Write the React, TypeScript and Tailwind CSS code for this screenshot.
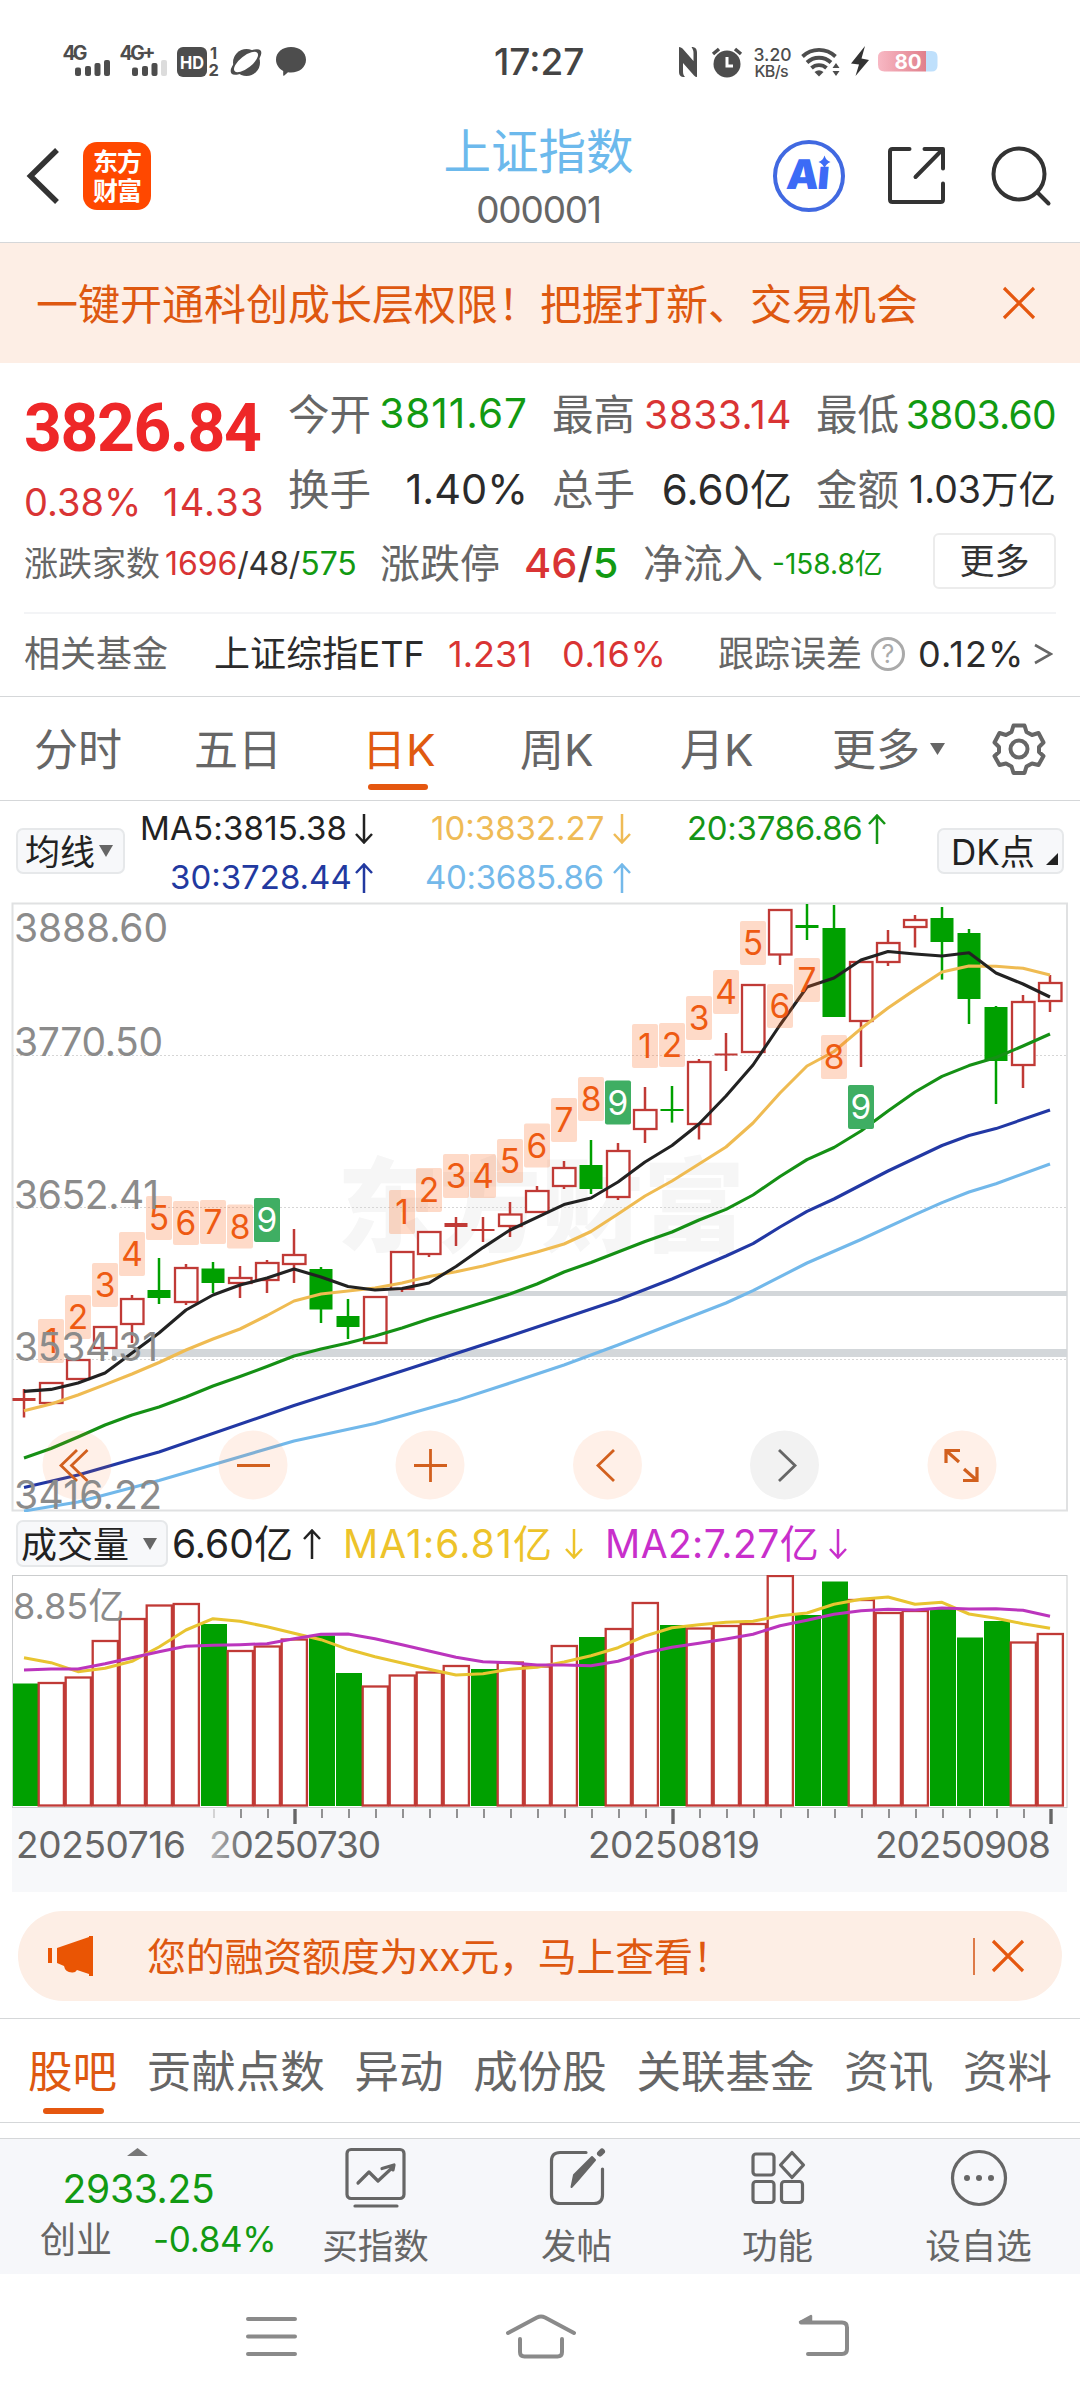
import React from 'react'

type Candle = {
  up: boolean
  top: number
  bottom: number
  high: number
  low: number
}

const STEP = 27
const FIRST_X = 24
const RED = '#c03a36'
const GREEN = '#00a000'

const cx = (i: number) => FIRST_X + i * STEP

const c = (up: boolean, top: number, bottom: number, high = top, low = bottom): Candle => ({
  up,
  top,
  bottom,
  high,
  low,
})

const candles: Candle[] = [
  c(true, 1398, 1401, 1389, 1417.5),
  c(true, 1382, 1404),
  c(true, 1359, 1380),
  c(true, 1326, 1349),
  c(true, 1298, 1325, 1295, 1343),
  c(false, 1290, 1298, 1258, 1304),
  c(true, 1267, 1303, 1264, 1305),
  c(false, 1268.5, 1283, 1262, 1293),
  c(true, 1277, 1284, 1266, 1298),
  c(true, 1262, 1281, 1260, 1293),
  c(true, 1254, 1265, 1229, 1283),
  c(false, 1269, 1309.5, 1267, 1323),
  c(false, 1316, 1327, 1299, 1339),
  c(true, 1296, 1344),
  c(true, 1251, 1290, 1251, 1292),
  c(true, 1231, 1255, 1231, 1257),
  c(true, 1223, 1227, 1217, 1246),
  c(true, 1229, 1231, 1217, 1242),
  c(true, 1213.5, 1227, 1202, 1237),
  c(true, 1190, 1213, 1186, 1213),
  c(true, 1167, 1187, 1161, 1189),
  c(false, 1165, 1189, 1140, 1194),
  c(true, 1150, 1198, 1143, 1200),
  c(true, 1109, 1130, 1087, 1143),
  c(false, 1109, 1111, 1086, 1122.6),
  c(true, 1061, 1125, 1059, 1139.5),
  c(true, 1053.5, 1055.5, 1033, 1071),
  c(true, 984, 1053),
  c(true, 909, 955.5, 909, 965),
  c(false, 925, 928, 904, 940),
  c(false, 928, 1017, 905, 1017),
  c(true, 961, 1022, 961, 1067),
  c(true, 942, 963, 930, 966),
  c(true, 919, 928, 915, 947.5),
  c(false, 918, 942, 907, 979.6),
  c(false, 933, 999, 929, 1024),
  c(false, 1007, 1061, 1006, 1104),
  c(true, 1001, 1066, 995, 1088),
  c(true, 982, 1002, 975, 1012),
]

const ma5 = [
  1391.4, 1389.4, 1383, 1373, 1353, 1333, 1310, 1295, 1285, 1278, 1269, 1277, 1286.5, 1290, 1288.5, 1283, 1266.5,
  1247.6, 1230, 1217.4, 1204.6, 1198, 1182, 1162, 1145.5, 1124, 1096, 1065, 1025, 987, 978, 960, 951.5, 954, 956,
  952.7, 973, 984, 997,
]
const ma10 = [
  1410.7, 1404, 1395, 1384.6, 1374, 1362.5, 1350, 1339, 1329, 1315.5, 1301, 1294, 1291, 1288, 1283, 1276.5, 1271.7,
  1266, 1259, 1252, 1244, 1231.5, 1214, 1196, 1181, 1164, 1147, 1123, 1093, 1066, 1051.5, 1028.6, 1008, 989.6, 972,
  966, 966.3, 968.3, 975,
]
const ma20 = [
  1458, 1448.5, 1437, 1425, 1415, 1407, 1397, 1386, 1376.5, 1366.5, 1356, 1349, 1343, 1336, 1328, 1319, 1310.7, 1302.6,
  1294, 1284, 1272, 1262.5, 1252, 1241.5, 1232, 1220, 1209.4, 1195, 1176.5, 1159.6, 1147.5, 1131, 1111, 1092, 1076.4,
  1065.6, 1057.5, 1046, 1034,
]
// index -> y pairs, the long averages are close to straight between them
const ma30: [number, number][] = [
  [0, 1487.5], [2, 1475], [4, 1459.5], [5, 1452], [10, 1405.5], [14, 1371], [18, 1336], [20, 1318], [22, 1300],
  [24, 1279], [26, 1256], [27, 1243.6], [28, 1227], [29, 1211.4], [30, 1199], [32, 1171], [34, 1145.5],
  [35, 1135.5], [36, 1128.6], [38, 1110],
]
const ma40: [number, number][] = [
  [0, 1511], [2, 1502], [5, 1480.6], [10, 1441], [13, 1423.5], [16, 1400.6], [18, 1383], [20, 1365], [22, 1345],
  [24, 1324], [26, 1303], [27, 1290.6], [29, 1263], [31, 1239.5], [33, 1214.6], [34, 1202.6], [35, 1192],
  [36, 1183.7], [38, 1164],
]

const marks: [number, number, number][] = [
  [1, 1, 1319], [2, 2, 1295], [3, 3, 1263], [4, 4, 1232], [5, 5, 1196], [6, 6, 1201], [7, 7, 1200], [8, 8, 1204.5],
  [9, 9, 1198], [14, 1, 1190], [15, 2, 1168], [16, 3, 1154], [17, 4, 1154], [18, 5, 1139], [19, 6, 1123.5],
  [20, 7, 1098], [21, 8, 1077], [22, 9, 1080.5], [23, 1, 1024], [24, 2, 1023], [25, 3, 996], [26, 4, 970],
  [27, 5, 921], [28, 6, 984], [29, 7, 958], [30, 8, 1035], [31, 9, 1085],
]

const volumes: [boolean, number][] = [
  [false, 1683.5], [true, 1682], [true, 1676.5], [true, 1640], [true, 1618], [true, 1604.5], [true, 1603],
  [false, 1624], [true, 1650], [true, 1645.5], [true, 1638.5], [false, 1635.5], [false, 1673], [true, 1685.5],
  [true, 1674.5], [true, 1671.5], [true, 1665], [false, 1669], [true, 1661.5], [true, 1665.5], [true, 1645],
  [false, 1637], [true, 1628], [true, 1602], [false, 1625], [true, 1627.5], [true, 1625], [true, 1623],
  [true, 1575], [false, 1615], [false, 1581.5], [true, 1599], [true, 1612], [true, 1610], [false, 1608],
  [false, 1637.5], [false, 1621], [true, 1641.5], [true, 1633],
]
const volMa1 = [
  1657.7, 1662.7, 1671.7, 1668.3, 1661.3, 1647, 1630, 1618.7, 1621.3, 1626.7, 1633.3, 1639.7, 1649.3, 1656.7, 1663,
  1669.3, 1675, 1673.7, 1669.3, 1667.3, 1662, 1655.7, 1647.7, 1636, 1627.7, 1624.7, 1622.3, 1621.3, 1615.7, 1613,
  1604.3, 1599.3, 1597, 1604.3, 1602.3, 1614, 1618.3, 1623.7, 1628.3,
]
const volMa2 = [
  1670, 1669, 1669, 1663.7, 1657.7, 1651.7, 1646.3, 1645.3, 1644.7, 1643.7, 1638.7, 1634.3, 1634, 1638.7, 1644.7,
  1651, 1657.3, 1661.7, 1662.7, 1665, 1665, 1665.7, 1661.3, 1653, 1647.3, 1643.3, 1639, 1634.3, 1625.7, 1620.3,
  1614.3, 1610.7, 1609.3, 1610, 1608, 1609, 1608.7, 1610.3, 1616.3,
]

const line = (ys: number[]) => ys.map((y, i) => `${cx(i)},${y}`).join(' ')
const sparse = (pts: [number, number][]) => pts.map(([i, y]) => `${cx(i)},${y}`).join(' ')

const StatusBar = () => (
  <div className="flex h-[110px] items-start pt-[35px] text-[#4d4d4d]">
    <svg className="ml-[60px]" width="250" height="50" viewBox="60 35 250 50" fill="currentColor">
      <g fontFamily="Inter" fontWeight="700" fontSize="19.5">
        <text x="62.5" y="59.5" textLength="25">4G</text>
        <text x="119.5" y="59.5" textLength="36">4G+</text>
        <text x="210" y="59" fontSize="16.5">1</text>
        <text x="208.500" y="76" fontSize="16.5">2</text>
      </g>
      <rect x="75" y="67.5" width="6" height="8.5" rx="2" />
      <rect x="85" y="66" width="6" height="10" rx="2" />
      <rect x="94.5" y="63" width="6" height="13" rx="2" />
      <rect x="104" y="60" width="6" height="16" rx="2" />
      <rect x="132" y="67.5" width="6" height="8.5" rx="2" />
      <rect x="142" y="66" width="6" height="10" rx="2" />
      <rect x="151.5" y="63" width="6" height="13" rx="2" />
      <rect x="161" y="60" width="6" height="16" rx="2" fill="#dcdcdc" />
      <rect x="177" y="47" width="30" height="30" rx="6" />
      <text x="180" y="68.5" fill="#fff" fontFamily="Inter" fontWeight="700" fontSize="18" textLength="24" lengthAdjust="spacingAndGlyphs">HD</text>
      <circle cx="246.500" cy="62.500" r="13.500" />
      <ellipse cx="246" cy="62" rx="18.500" ry="7.500" transform="rotate(-38 246 62)" />
      <ellipse cx="246" cy="62" rx="14.500" ry="6" transform="rotate(-38 246 62)" fill="#fff" />
      <path d="M291 47c8.600 0 15 5.300 15 12.700S299.500 72.500 291 72.500c-1 0-2 0-3-.3l-4 3.500q-1 .5-.8-1V71C279 68.500 276 64.500 276 59.700 276 52.300 282.500 47 291 47z" />
    </svg>
    <div className="ml-[184px] mt-[8px] w-[96px] text-[37px] leading-[38px] font-medium text-[#444]">
      17:27
    </div>
    <svg className="ml-[88px]" width="262" height="50" viewBox="678 35 262 50" fill="currentColor">
      <path d="M679 47q2 0 3.500 1.500L693.500 61V53c0-3-1-4-2-6 4 0 5.500 2 5.500 6v24q-1.500 0-3-1.500L683 63v8c0 3 .5 4 2 6-5 0-6-2-6-6z" />
      <circle cx="727" cy="64" r="13.500" />
      <path d="M713 54l6-5M741 54l-6-5" stroke="currentColor" strokeWidth="3.500" />
      <path d="M727 57v9h6" stroke="#fff" strokeWidth="3" fill="none" />
      <g fontFamily="Inter" fontSize="17.500" fontWeight="500">
        <text x="753.5" y="61" textLength="38">3.20</text>
        <text x="754.5" y="76.500" fontSize="16" textLength="34">KB/s</text>
      </g>
      <g fill="none" stroke="currentColor" strokeWidth="3.800">
        <path d="M802.500 56.500a24 24 0 0 1 33 0" />
        <path d="M807 62.500a17.500 17.500 0 0 1 24 0" />
        <path d="M811.500 68a11 11 0 0 1 15 0" />
      </g>
      <path d="M814.500 72q4.500-3.500 9 0l-4.500 4.500z" />
      <path d="M832.500 68l3.500-5 3.500 5zM832.500 71h7l-3.500 5z" />
      <path d="M865 46l-14 17.500 8 1L855.500 76 869 60l-7.500-1.500z" fill="#333" />
      <defs>
        <linearGradient id="battery" x1="0" x2="1">
          <stop offset="0" stopColor="#f8b8c4" />
          <stop offset="1" stopColor="#e0808c" />
        </linearGradient>
      </defs>
      <path d="M926 51h5.500q6 0 6 6v8.500q0 6-6 6H926z" fill="#bfe0fc" />
      <path d="M926 51H884.500q-6.500 0-6.500 6.500v7q0 7 6.500 7H926z" fill="url(#battery)" />
      <text x="894.500" y="68.500" fontFamily="Inter" fontWeight="700" fontSize="20.500" fill="#fff">80</text>
    </svg>
  </div>
)

const Header = () => (
  <div className="flex h-[133px] items-center border-b border-[#d5d7d9]">
    <div className="flex w-[415px] items-center pl-[26px]">
      <svg width="34" height="56" viewBox="0 0 34 56" fill="none" stroke="#333" strokeWidth="5.500">
        <path d="M31 2L4.500 28 31 54" />
      </svg>
      <div className="ml-[23px] flex size-[68px] flex-col items-center justify-center rounded-[14px] bg-[#ff4800] pt-[2px] text-[25px] leading-[29px] font-bold tracking-[-1px] text-white">
        <span>东方</span>
        <span>财富</span>
      </div>
    </div>
    <div className="flex w-[247px] flex-col items-center pt-[8px]">
      <span className="text-[47.5px] leading-[60px] text-[#6cb9ec]">上证指数</span>
      <span className="text-[37px] leading-[56px] tracking-[-1.2px] text-[#666]">000001</span>
    </div>
    <div className="flex flex-1 items-center justify-end pr-[28px]">
      <svg width="74" height="74" viewBox="0 0 74 74" fill="#3c6bf6">
        <circle cx="37" cy="37" r="34" fill="none" stroke="#4169e1" strokeWidth="4" />
        <text x="14" y="50" fontFamily="Inter" fontWeight="900" fontSize="41" textLength="43" transform="skewX(-5) translate(4 0)">Aı</text>
        <path d="M52.500 16.500q1.500 5 6 6.500-4.500 1.500-6 6.500-1.500-5-6-6.500 4.500-1.500 6-6.500z" />
      </svg>
      <svg className="ml-[41px]" width="60" height="60" viewBox="0 0 60 60" fill="none" stroke="#333" strokeWidth="4" strokeLinecap="round" strokeLinejoin="round">
        <path d="M22.500 3H5.500Q3 3 3 5.500V53.500Q3 56 5.500 56H53.500Q56 56 56 53.500V37.500" />
        <path d="M37.500 3H56V22.500M55 4L28.500 31" />
      </svg>
      <svg className="ml-[43px]" width="62" height="62" viewBox="0 0 62 62" fill="none" stroke="#333" strokeWidth="4" strokeLinecap="round">
        <circle cx="29" cy="29" r="25.500" />
        <path d="M47.500 47.500L58.500 58.500" />
      </svg>
    </div>
  </div>
)

const Close = () => (
  <svg width="34" height="34" viewBox="0 0 34 34" stroke="#e5570f" strokeWidth="3.200">
    <path d="M2 2L32 32M32 2L2 32" />
  </svg>
)

const Banner = () => (
  <div className="flex h-[120px] items-center justify-between bg-[#fdeee5] pr-[44px] pl-[36px]">
    <span className="pt-[3px] text-[42px] leading-none whitespace-nowrap text-[#de5810]">
      一键开通科创成长层权限！把握打新、交易机会
    </span>
    <Close />
  </div>
)

interface StatProps {
  label: string
  children: React.ReactNode
}

const Stat = ({ label, children }: StatProps) => (
  <div className="flex h-[75px] items-center justify-between whitespace-nowrap">
    <span className="pt-[2px] text-[41.5px] leading-none text-[#666]">{label}</span>
    {children}
  </div>
)

const Quote = () => (
  <div className="h-[334px] border-b border-[#d5d7d9]">
    <div className="flex h-[165px] pr-[24px] pl-[24px]">
      <div className="w-[264px] pt-[26px]">
        <div className="flex h-[75px] items-center pt-[4px] font-['Roboto'] text-[66px] leading-none font-bold tracking-[-1.4px] text-[#ee2728]">
          3826.84
        </div>
        <div className="flex h-[75px] items-center text-[38px] leading-none text-[#d93434]">
          <span className="w-[139px]">0.38%</span>
          <span className="tracking-[1.2px]">14.33</span>
        </div>
      </div>
      <div className="grid h-[150px] flex-1 grid-cols-3 gap-x-6 pt-[14px]">
        <Stat label="今开"><span className="text-[40.5px] leading-none tracking-[1px] text-[#129a12]">3811.67</span></Stat>
        <Stat label="最高"><span className="text-[39px] leading-none tracking-[0.5px] text-[#d93434]">3833.14</span></Stat>
        <Stat label="最低"><span className="text-[39px] leading-none tracking-[-0.7px] text-[#129a12]">3803.60</span></Stat>
        <Stat label="换手"><span className="text-[41.5px] leading-none text-[#2b2b2b]">1.40%</span></Stat>
        <Stat label="总手"><span className="text-[42px] leading-none text-[#2b2b2b]">6.60亿</span></Stat>
        <Stat label="金额"><span className="text-[37.5px] leading-none text-[#2b2b2b]">1.03万亿</span></Stat>
      </div>
    </div>
    <div className="flex h-[70px] items-center pt-[2px] pl-[24px] leading-none whitespace-nowrap text-[#666]">
      <span className="w-[141px] text-[34px]">涨跌家数</span>
      <span className="w-[215px] text-[32px] tracking-[-0.1px] text-[#333]">
        <span className="text-[#d93434]">1696</span>/48/<span className="text-[#129a12]">575</span>
      </span>
      <span className="w-[144px] text-[40px]">涨跌停</span>
      <span className="w-[119px] text-[41.5px] font-medium text-[#333]">
        <span className="text-[#d93434]">46</span>/<span className="text-[#129a12]">5</span>
      </span>
      <span className="w-[129px] text-[40px]">净流入</span>
      <span className="w-[161px] text-[28px] text-[#129a12]">-158.8亿</span>
      <span className="mt-[-6px] flex h-[56px] w-[123px] items-center justify-center rounded-[6px] border-2 border-[#ececec] text-[35px] text-[#333]">
        更多
      </span>
    </div>
    <div className="mx-[24px] mt-[14px] border-t-2 border-[#f3f4f6]" />
    <div className="flex h-[78px] items-center pt-[2px] pl-[24px] text-[36px] leading-none whitespace-nowrap text-[#666]">
      <span className="w-[190px]">相关基金</span>
      <span className="w-[234px] tracking-[0.1px] text-[#2b2b2b]">上证综指ETF</span>
      <span className="w-[114px] text-[#d93434]">1.231</span>
      <span className="w-[156px] tracking-[0.6px] text-[#d93434]">0.16%</span>
      <span className="w-[153px]">跟踪误差</span>
      <span className="flex size-[34px] items-center justify-center rounded-full border-[3px] border-[#aaa] text-[25px] text-[#aaa]">?</span>
      <span className="ml-[13px] w-[115px] tracking-[1.1px] text-[#2b2b2b]">0.12%</span>
      <svg width="20" height="22" viewBox="0 0 20 22" fill="none" stroke="#666" strokeWidth="2.600">
        <path d="M2 2L18 11 2 20" />
      </svg>
    </div>
  </div>
)

const PeriodTabs = () => (
  <div className="flex h-[104px] items-center border-b border-[#d5d7d9] pl-[34px] text-[44px] leading-none whitespace-nowrap text-[#666]">
    <span className="w-[160px] pt-[3px]">分时</span>
    <span className="w-[168px] pt-[3px]">五日</span>
    <span className="relative w-[158px] pt-[3px] text-[#e05a10]">
      日K
      <i className="absolute top-[59px] left-[6px] h-[6px] w-[60px] rounded-full bg-[#e5570f]" />
    </span>
    <span className="w-[160px] pt-[3px]">周K</span>
    <span className="w-[152px] pt-[3px]">月K</span>
    <span className="w-[98px] pt-[3px]">更多</span>
    <svg width="15" height="12" viewBox="0 0 15 12" fill="#666"><path d="M0 0h15L7.500 12z" /></svg>
    <svg className="ml-[47px]" width="54" height="54" viewBox="-27 -27 54 54" fill="none" stroke="#666" strokeWidth="4" strokeLinejoin="round">
      <path d="M-5.500-23.500H5.500L7.500-17 13-14 19.500-16 24.500-6.500 20-2V3L24.500 7 19.500 16 13 14.500 7.500 17.500 5.500 24H-5.500L-7.500 17.500-13 14.500-19.500 16-24.500 7-20 3V-2L-24.500-6.500-19.500-16-13-14-7.500-17Z" />
      <circle r="8.500" />
    </svg>
  </div>
)

const Arrow = ({ down, className }: { down?: boolean; className?: string }) => (
  <svg className={className} width="18" height="30" viewBox="0 0 18 30" fill="none" stroke="currentColor" strokeWidth="2.500">
    {down ? <path d="M9 0V28M1 20l8 8.500 8-8.500" /> : <path d="M9 30V2M1 10l8-8.500 8 8.500" />}
  </svg>
)

const MaLegend = () => (
  <div className="flex h-[101px] pl-[16px] text-[33px] leading-none whitespace-nowrap">
    <div className="mt-[27px] flex h-[46px] w-[109px] items-center rounded-[7px] border-2 border-[#e6e8ea] bg-[#f7f8fa] pl-[7px] text-[35px] text-[#222]">
      <span className="w-[74px] pt-[2px]">均线</span>
      <svg width="14" height="12" viewBox="0 0 14 12" fill="#666"><path d="M0 0h14L7 12z" /></svg>
    </div>
    <div className="ml-[15px] w-[797px] pt-[3px]">
      <div className="flex h-[49px] items-center">
        <span className="w-[215px] tracking-[0.2px] text-[#222]">MA5:3815.38</span>
        <Arrow down className="text-[#222]" />
        <span className="ml-[58px] w-[182px] text-[#efbb56]">10:3832.27</span>
        <Arrow down className="text-[#efbb56]" />
        <span className="ml-[56px] w-[181px] tracking-[-0.3px] text-[#159515]">20:3786.86</span>
        <Arrow className="text-[#159515]" />
      </div>
      <div className="flex h-[49px] items-center">
        <span className="ml-[30px] w-[185px] text-[#2239a0]">30:3728.44</span>
        <Arrow className="text-[#2239a0]" />
        <span className="ml-[52px] w-[188px] tracking-[-0.3px] text-[#74b9ea]">40:3685.86</span>
        <Arrow className="text-[#74b9ea]" />
      </div>
    </div>
    <div className="mt-[27px] flex h-[46px] w-[127px] items-center rounded-[7px] border-2 border-[#e6e8ea] bg-[#f7f8fa] pl-[12px] text-[35px] text-[#222]">
      <span className="w-[95px] pt-[2px]">DK点</span>
      <svg className="mt-[16px]" width="12" height="12" viewBox="0 0 12 12" fill="#222"><path d="M12 0V12H0z" /></svg>
    </div>
  </div>
)

const KLineChart = () => (
  <svg className="block" width="1080" height="610" viewBox="0 902 1080 610" fontFamily="Inter">
    <text x="337" y="1244" fontFamily="Noto Sans CJK SC" fontWeight="900" fontSize="102" fill="#f6f6f6">东方财富</text>
    <g stroke="#d6d6d6" strokeWidth="1" strokeDasharray="2 2">
      <path d="M12 1055.500H1067M12 1207.500H1067M12 1359.500H1067" />
    </g>
    <rect x="12.500" y="903.500" width="1054.500" height="607" fill="none" stroke="#e0e1e2" strokeWidth="2" />
    <rect x="388" y="1291" width="679" height="5" fill="#d3d7da" />
    <rect x="112" y="1349" width="955" height="8" fill="#d3d7da" />

    {candles.map((k, i) => {
      const x = cx(i)
      const thin = k.bottom - k.top < 5
      const color = k.up ? RED : GREEN
      return (
        <g key={i}>
          <path d={`M${x} ${k.high}V${k.low}`} stroke={color} strokeWidth="2.500" />
          {thin || !k.up ? (
            <rect x={x - 11.5} y={k.top} width="23" height={k.bottom - k.top} fill={color} />
          ) : (
            <rect x={x - 11} y={k.top + 1} width="22.500" height={k.bottom - k.top - 2} fill="#fff" stroke={color} strokeWidth="2.300" />
          )}
        </g>
      )
    })}

    <g fill="none" strokeWidth="3.100" strokeLinejoin="round">
      <polyline points={sparse(ma40)} stroke="#72b8ea" />
      <polyline points={sparse(ma30)} stroke="#2238a4" />
      <polyline points={line(ma20)} stroke="#159015" />
      <polyline points={line(ma10)} stroke="#efbb52" />
      <polyline points={line(ma5)} stroke="#222" />
    </g>

    {marks.map(([i, n, y]) => (
      <g key={i}>
        <rect
          x={cx(i) - 13}
          y={y}
          width="26"
          height="44"
          rx="2"
          fill={n === 9 ? '#3fae63' : '#fa6a24'}
          fillOpacity={n === 9 ? 1 : 0.25}
        />
        <text x={cx(i)} y={y + 34} fontSize="33.500" textAnchor="middle" fill={n === 9 ? '#fff' : '#ee5a12'}>
          {n}
        </text>
      </g>
    ))}

    <g fill="#ff6a20" fillOpacity="0.1">
      <circle cx="77" cy="1465" r="34.500" />
      <circle cx="253" cy="1465" r="34.500" />
      <circle cx="430" cy="1465" r="34.500" />
      <circle cx="607.500" cy="1465" r="34.500" />
      <circle cx="962" cy="1465" r="34.500" />
    </g>
    <circle cx="784.500" cy="1465" r="34.500" fill="#f2f2f2" />
    <g fill="none" stroke="#d2601e" strokeWidth="2.800">
      <path d="M77 1450L61 1465.500 77 1481M87.500 1450L71.500 1465.500 87.500 1481" />
      <path d="M237 1465.500H270M414 1465.500H447M430.500 1449V1482" />
      <path d="M614 1450L598 1465.500 614 1481" />
      <path d="M779 1450L795 1465.500 779 1481" stroke="#666" />
      <path d="M946 1463V1450.500H960M946 1450.500L959 1462M964 1469L977 1480.500M963 1480.500H977V1467" strokeWidth="3.200" />
    </g>

    <g fontSize="39" fill="#8b8b8b">
      <text x="14" y="942" textLength="154">3888.60</text>
      <text x="14" y="1056" textLength="149">3770.50</text>
      <text x="14" y="1209" textLength="145">3652.41</text>
      <text x="14" y="1361" textLength="144">3534.31</text>
      <text x="14" y="1509" textLength="148">3416.22</text>
    </g>
  </svg>
)

const VolumeHeader = () => (
  <div className="flex h-[63px] items-center pl-[16px] text-[39px] leading-none whitespace-nowrap">
    <div className="flex h-[47px] w-[152px] items-center rounded-[7px] border-2 border-[#e6e8ea] bg-[#f7f8fa] pl-[3px] text-[36px] text-[#222]">
      <span className="w-[122px] pt-[2px]">成交量</span>
      <svg width="14" height="12" viewBox="0 0 14 12" fill="#666"><path d="M0 0h14L7 12z" /></svg>
    </div>
    <span className="ml-[4px] w-[131px] text-[#222]">6.60亿</span>
    <Arrow className="text-[#222]" />
    <span className="ml-[22px] w-[222px] tracking-[1.1px] text-[#edc32a]">MA1:6.81亿</span>
    <Arrow down className="text-[#edc32a]" />
    <span className="ml-[22px] w-[224px] tracking-[0.4px] text-[#c82fcb]">MA2:7.27亿</span>
    <Arrow down className="text-[#c82fcb]" />
  </div>
)

const VolumeChart = () => (
  <svg className="block" width="1080" height="317" viewBox="0 1575 1080 317" fontFamily="Inter, 'Noto Sans CJK SC'">
    <defs>
      <linearGradient id="dateFade" gradientUnits="userSpaceOnUse" x1="205" x2="245" y1="0" y2="0">
        <stop offset="0" stopColor="#666" stopOpacity="0.35" />
        <stop offset="1" stopColor="#666" />
      </linearGradient>
    </defs>
    <rect x="12" y="1808" width="1055" height="84" fill="#f7f8fa" />
    <rect x="12.500" y="1575.500" width="1054.500" height="232" fill="none" stroke="#cbcdce" />
    {volumes.map(([up, y], i) =>
      up ? (
        <rect key={i} x={cx(i) - 12.3} y={y + 1} width="25.200" height={1805.5 - y - 1} fill="#fff" stroke={RED} strokeWidth="2.300" />
      ) : (
        <rect key={i} x={cx(i) - (i ? 12 : 11)} y={y} width={i ? 26 : 25} height={1806 - y} fill={GREEN} />
      ),
    )}
    <g fill="none" strokeWidth="3" strokeLinejoin="round">
      <polyline points={line(volMa1)} stroke="#e8c431" />
      <polyline points={line(volMa2)} stroke="#bb35bd" />
    </g>
    {volumes.map((_, i) => {
      if (i < 7) return null
      const major = i === 10 || i === 24 || i === 38
      return (
        <path
          key={i}
          d={`M${cx(i) + 1} 1809V${major ? 1824 : 1818}`}
          stroke={i === 7 ? '#c4c4c4' : '#666'}
          strokeWidth={major ? 3.4 : 1.4}
        />
      )
    })}
    <text x="13" y="1619" fontSize="36" fill="#8b8b8b">8.85亿</text>
    <g fontSize="37" fill="#666">
      <text x="16" y="1858" textLength="170">20250716</text>
      <text x="209" y="1858" textLength="172" fill="url(#dateFade)">20250730</text>
      <text x="588" y="1858" textLength="172">20250819</text>
      <text x="875" y="1858" textLength="176">20250908</text>
    </g>
  </svg>
)

const Promo = () => (
  <div className="h-[126px] pt-[19px]">
    <div className="mx-[18px] flex h-[90px] items-center rounded-full bg-[#fdeee5] pl-[30px] text-[#de5810]">
      <svg width="46" height="40" viewBox="0 0 46 40" fill="#ea5504">
        <path d="M0 12h4v15H0zM9 12L41 1V0h4v40h-4v-2l-12-4q-2 3-5 2.500-7-.5-8-6.500L9 27z" />
      </svg>
      <span className="ml-[53px] w-[826px] text-[39px] leading-none tracking-[-0.25px] whitespace-nowrap">您的融资额度为xx元，马上查看！</span>
      <span className="mr-[16px] h-[37px] w-[2px] bg-[#de7a48]" />
      <Close />
    </div>
  </div>
)

const sections = ['股吧', '贡献点数', '异动', '成份股', '关联基金', '资讯', '资料']

const SectionTabs = () => (
  <div className="flex h-[105px] items-center justify-between border-y border-[#d5d7d9] pt-[4px] pr-[28px] pl-[28px] text-[44.5px] leading-none whitespace-nowrap text-[#666]">
    {sections.map((name, i) => (
      <span key={name} className={i === 0 ? 'relative text-[#de5810]' : ''}>
        {name}
        {i === 0 && <i className="absolute top-[58px] left-[15px] h-[6px] w-[61px] rounded-full bg-[#e5570f]" />}
      </span>
    ))}
  </div>
)

const BarItem = ({ label, children }: StatProps) => (
  <div className="flex w-[201px] flex-col items-center">
    <svg width="66" height="66" viewBox="-33 -33 66 66" fill="none" stroke="#666" strokeWidth="3.200" strokeLinecap="round" strokeLinejoin="round">
      {children}
    </svg>
    <span className="mt-[18px] text-[35.5px] leading-none text-[#666]">{label}</span>
  </div>
)

const BottomBar = () => (
  <div className="mt-[15px] flex h-[136px] border-t border-[#d5d7d9] bg-[#f6f7fa] leading-none whitespace-nowrap">
    <div className="flex w-[275px] flex-col items-center pt-[9px]">
      <svg width="21" height="8" viewBox="0 0 21 8" fill="#777"><path d="M10.500 0L21 8H0z" /></svg>
      <span className="mt-[13px] ml-[2px] text-[39px] tracking-[-0.3px] text-[#129a12]">2933.25</span>
      <div className="mt-[12px] flex items-center pl-[40px]">
        <span className="w-[113px] pt-[2px] text-[36px] text-[#666]">创业</span>
        <span className="w-[122px] text-[35px] tracking-[-0.3px] text-[#129a12]">-0.84%</span>
      </div>
    </div>
    <div className="flex pt-[6px]">
      <BarItem label="买指数">
        <rect x="-29" y="-28.500" width="57" height="49" rx="4" />
        <path d="M-21 28H21" />
        <path d="M-18 5L-7-6 2 3 17-11M6-9.500L18-13 17-8" />
      </BarItem>
      <BarItem label="发帖">
        <path d="M9-25.500H-17Q-25.500-25.500-25.500-17V17Q-25.500 25.500-17 25.500H17Q25.500 25.500 25.500 17V-9" />
        <path d="M17-17L-1 4-6.500 10-4-2 14-20z" transform="translate(1 -1)" fill="#666" strokeWidth="2" />
        <path d="M23-24.500L25-26.500" strokeWidth="6" />
      </BarItem>
      <BarItem label="功能">
        <rect x="-25" y="-24" width="21" height="21" rx="3" />
        <rect x="-25" y="3.500" width="21" height="21" rx="3" />
        <rect x="3.500" y="3.500" width="21" height="21" rx="3" />
        <path d="M14-25.500L25.500-13 14-.5 2.500-13z" />
      </BarItem>
      <BarItem label="设自选">
        <circle r="26.500" />
        <g fill="#666" stroke="none">
          <circle cx="-12" r="3" />
          <circle r="3" />
          <circle cx="12" r="3" />
        </g>
      </BarItem>
    </div>
  </div>
)

const SystemNav = () => (
  <div className="flex h-[126px] items-start pt-[39px] pl-[244px]">
    <svg width="56" height="48" viewBox="0 0 56 48" stroke="#8a8a8a" strokeWidth="4" strokeLinecap="round">
      <path d="M4 6H51M4 23.500H51M4 41H51" />
    </svg>
    <svg className="ml-[204px]" width="74" height="48" viewBox="0 0 74 48" fill="none" stroke="#8a8a8a" strokeWidth="4" strokeLinecap="round" strokeLinejoin="round">
      <path d="M4 20L33 4.500Q37 2.500 41 4.500L70 20" />
      <path d="M16 26V39Q16 43.500 20.500 43.500H53.500Q58 43.500 58 39V26" />
    </svg>
    <svg className="ml-[218px]" width="58" height="48" viewBox="0 0 58 48" fill="none" stroke="#8a8a8a" strokeWidth="4" strokeLinecap="round" strokeLinejoin="round">
      <path d="M5 9.500H46Q51 9.500 51 14.500V36Q51 41 46 41H12" />
      <path d="M4 9L15 3V9z" fill="#8a8a8a" strokeWidth="2.500" />
    </svg>
  </div>
)

const App = () => {
  return (
    <div lang="zh-CN" className="h-[2400px] w-[1080px] overflow-hidden bg-white font-['Inter','Noto_Sans_CJK_SC',sans-serif]">
      <StatusBar />
      <Header />
      <Banner />
      <Quote />
      <PeriodTabs />
      <MaLegend />
      <KLineChart />
      <VolumeHeader />
      <VolumeChart />
      <Promo />
      <SectionTabs />
      <BottomBar />
      <SystemNav />
    </div>
  )
}

export default App
